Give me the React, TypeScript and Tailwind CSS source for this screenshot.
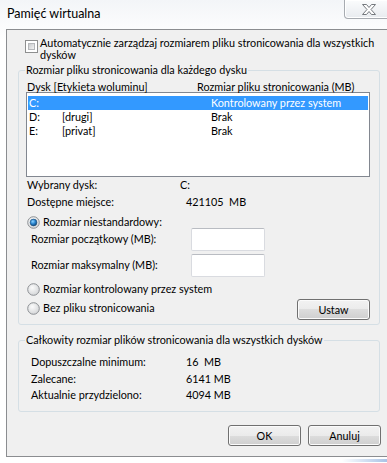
import React from "react"

const font = "font-['Lato','Noto_Sans',sans-serif]"

function Radio({ checked }: { checked?: boolean }) {
  return (
    <svg width="13" height="13" viewBox="0 0 13 13" className="shrink-0">
      <defs>
        <radialGradient id="rbg" cx="0.4" cy="0.35" r="0.7">
          <stop offset="0" stopColor="#fbfbfb" />
          <stop offset="1" stopColor="#d2d4d6" />
        </radialGradient>
        <radialGradient id="rdot" cx="0.4" cy="0.35" r="0.7">
          <stop offset="0" stopColor="#8fd2ff" />
          <stop offset="0.5" stopColor="#2a86d0" />
          <stop offset="1" stopColor="#0b3f70" />
        </radialGradient>
      </defs>
      <circle cx="6.5" cy="6.5" r="5.8" fill="url(#rbg)" stroke="#8d9094" />
      {checked && <circle cx="6.5" cy="6.5" r="3.4" fill="url(#rdot)" stroke="#1d4f7c" strokeWidth="0.6" />}
    </svg>
  )
}

function Checkbox() {
  return (
    <div className="w-[13px] h-[13px] shrink-0 border border-[#8e8f8f] bg-white p-[2px]">
      <div className="w-full h-full bg-[linear-gradient(135deg,#c9cbcd,#f3f3f3)] border border-[#b5b7ba]" />
    </div>
  )
}

function Button({ label }: { label: string }) {
  return (
    <button className="w-[73px] h-[21px] rounded-[3px] border border-[#707070] bg-[linear-gradient(to_bottom,#f2f2f2_0%,#ebebeb_50%,#dddddd_50%,#cfcfcf_100%)] shadow-[inset_0_0_0_1px_#fbfbfb] text-[10.8px] leading-[12px] text-black flex items-center justify-center">
      {label}
    </button>
  )
}

function TextBox() {
  return <div className="w-[74px] h-[23px] rounded-[2px] border border-[#d9dbe0] border-t-[#b9bcc2] bg-white" />
}

export default function App() {
  return (
    <div className={`w-[387px] h-[463px] overflow-hidden bg-[linear-gradient(to_bottom,#f3f5f8,#ffffff_40px)] relative ${font} text-[10.8px] text-black`}>
      {/* Title bar */}
      <div className="h-[29px] flex items-center pl-[7px] text-[12.5px] text-black">Pamięć wirtualna</div>
      <div className="absolute top-0 left-[344px] w-[50px] h-[19px] rounded-bl-[4px] border border-t-0 border-[#a7abb1] bg-[linear-gradient(to_bottom,#fbfcfd,#e8ebef)] shadow-[inset_0_0_0_1px_#ffffff] flex items-center pl-[17px]">
        <svg width="14" height="11" viewBox="0 0 14 11">
          <polygon
            points="0.5,0.5 4.5,0.5 7,3.5 9.5,0.5 13.5,0.5 9,5.5 13.5,10.5 9.5,10.5 7,7.5 4.5,10.5 0.5,10.5 5,5.5"
            fill="#ffffff"
            stroke="#75797e"
            strokeWidth="1"
            strokeLinejoin="round"
          />
        </svg>
      </div>

      {/* Client area */}
      <div className="ml-[6px] w-[400px] h-[428px] border border-r-0 border-[#8b8d90] bg-[#f0f0f0] flex flex-col">
        <div className="mt-[7px] flex items-start">
          <div className="ml-[18px] mt-[3px]">
            <Checkbox />
          </div>
          <div className="ml-[2px] leading-[12px] whitespace-nowrap">
            Automatycznie zarządzaj rozmiarem pliku stronicowania dla wszystkich
            <br />
            dysków
          </div>
        </div>

        {/* Group 1 */}
        <fieldset className="mt-[3px] ml-[11px] w-[362px] border border-[#d5dfe5] rounded-[3px] pb-[4px]">
          <legend className="ml-[6px] px-[1px] leading-[12px]">Rozmiar pliku stronicowania dla każdego dysku</legend>
          <div className="mt-[5px] h-[11px] leading-[12px] flex pl-[8px] whitespace-nowrap">
            <div className="w-[170px]">Dysk [Etykieta woluminu]</div>
            <div>Rozmiar pliku stronicowania (MB)</div>
          </div>
          <div className="ml-[7px] w-[344px] h-[85px] border border-[#828790] bg-white pt-[3px] px-[1px]">
            <div className="h-[14px] flex items-center bg-[#3399ff] text-white pl-[1px] leading-[12px]">
              <div className="w-[33px]">C:</div>
              <div className="w-[149px]"></div>
              <div>Kontrolowany przez system</div>
            </div>
            <div className="h-[14px] flex items-center pl-[1px] leading-[12px]">
              <div className="w-[33px]">D:</div>
              <div className="w-[149px]">[drugi]</div>
              <div>Brak</div>
            </div>
            <div className="h-[14px] flex items-center pl-[1px] leading-[12px]">
              <div className="w-[33px]">E:</div>
              <div className="w-[149px]">[privat]</div>
              <div>Brak</div>
            </div>
          </div>
          <div className="mt-[2px] h-[12px] leading-[12px] flex pl-[8px]">
            <div className="w-[153px]">Wybrany dysk:</div>
            <div>C:</div>
          </div>
          <div className="mt-[5px] h-[12px] leading-[12px] flex pl-[8px]">
            <div className="w-[159px]">Dostępne miejsce:</div>
            <div className="whitespace-pre">421105  MB</div>
          </div>
          <div className="mt-[8px] h-[12px] leading-[12px] flex items-center pl-[8px] gap-[3px]">
            <Radio checked />
            <div>Rozmiar niestandardowy:</div>
          </div>
          <div className="h-[23px] flex items-center pl-[12px]">
            <div className="w-[160px]">Rozmiar początkowy (MB):</div>
            <TextBox />
          </div>
          <div className="mt-[3px] h-[23px] flex items-center pl-[12px]">
            <div className="w-[160px]">Rozmiar maksymalny (MB):</div>
            <TextBox />
          </div>
          <div className="mt-[6px] h-[12px] leading-[12px] flex items-center pl-[8px] gap-[3px]">
            <Radio />
            <div>Rozmiar kontrolowany przez system</div>
          </div>
          <div className="mt-[4px] h-[21px] flex items-start pl-[8px]">
            <div className="mt-[3px] h-[12px] leading-[12px] flex items-center gap-[3px]">
              <Radio />
              <div>Bez pliku stronicowania</div>
            </div>
            <div className="ml-auto mr-[9px]">
              <Button label="Ustaw" />
            </div>
          </div>
        </fieldset>

        {/* Group 2 */}
        <fieldset className="mt-[9px] ml-[11px] w-[362px] border border-[#d5dfe5] rounded-[3px] pb-[10px]">
          <legend className="ml-[6px] px-[1px] leading-[12px]">Całkowity rozmiar plików stronicowania dla wszystkich dysków</legend>
          <div className="mt-[10px] h-[12px] leading-[12px] flex pl-[12px]">
            <div className="w-[155px]">Dopuszczalne minimum:</div>
            <div className="whitespace-pre">16  MB</div>
          </div>
          <div className="mt-[5px] h-[12px] leading-[12px] flex pl-[12px]">
            <div className="w-[155px]">Zalecane:</div>
            <div>6141 MB</div>
          </div>
          <div className="mt-[4px] h-[12px] leading-[12px] flex pl-[12px]">
            <div className="w-[155px]">Aktualnie przydzielono:</div>
            <div>4094 MB</div>
          </div>
        </fieldset>

        <div className="mt-[13px] flex pl-[221px] gap-[7px]">
          <Button label="OK" />
          <Button label="Anuluj" />
        </div>
      </div>

      {/* Bottom frame */}
      <div className="h-[6px] flex justify-end">
        <div className="mt-[2px] w-[45px] h-[3px] bg-[linear-gradient(to_right,#ffffff,#a9c3e6)]" />
      </div>
    </div>
  )
}
